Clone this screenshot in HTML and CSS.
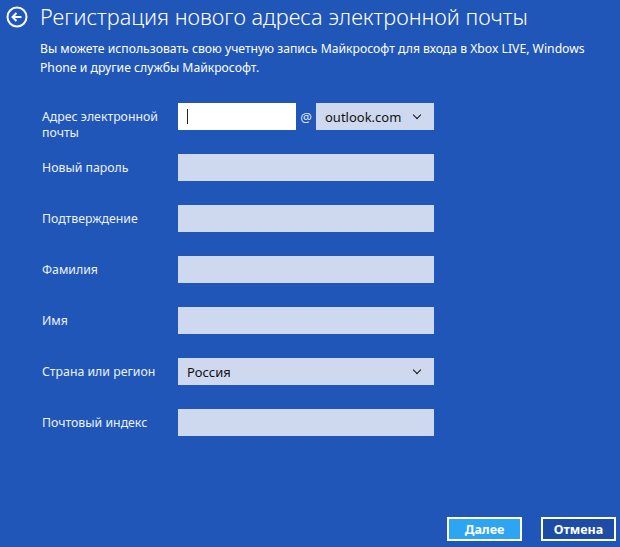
FILE: index.html
```html
<!DOCTYPE html>
<html lang="ru">
<head>
    <meta charset="UTF-8">
    <meta name="viewport" content="width=device-width, initial-scale=1.0">
    <link rel="stylesheet" href="styles.css">
    <title>Регистрация нового адреса электронной почты</title>
</head>
<body>

<div class="page">
    <div class="header">
        <svg class="back" width="22" height="22" viewBox="0 0 22 22">
            <circle cx="11" cy="11" r="9.5" fill="none" stroke="#fff" stroke-width="2"/>
            <path d="M15.5 11H7M10.5 7L6.5 11l4 4" fill="none" stroke="#fff" stroke-width="2"/>
        </svg>
        <h1>Регистрация нового адреса электронной почты</h1>
    </div>

    <p class="intro">Вы можете использовать свою учетную запись Майкрософт для входа в Xbox LIVE, Windows Phone и другие службы Майкрософт.</p>

    <div class="form">
        <div class="row">
            <label class="label">Адрес электронной почты</label>
            <div class="email">
                <div class="field white"><span class="caret"></span></div>
                <span class="at">@</span>
                <div class="field select">outlook.com<span class="chev"></span></div>
            </div>
        </div>
        <div class="row">
            <label class="label">Новый пароль</label>
            <div class="field"></div>
        </div>
        <div class="row">
            <label class="label">Подтверждение</label>
            <div class="field"></div>
        </div>
        <div class="row">
            <label class="label">Фамилия</label>
            <div class="field"></div>
        </div>
        <div class="row">
            <label class="label">Имя</label>
            <div class="field"></div>
        </div>
        <div class="row">
            <label class="label">Страна или регион</label>
            <div class="field select">Россия<span class="chev"></span></div>
        </div>
        <div class="row">
            <label class="label">Почтовый индекс</label>
            <div class="field"></div>
        </div>
    </div>

    <div class="footer">
        <button class="btn primary">Далее</button>
        <button class="btn">Отмена</button>
    </div>
</div>

</body>
</html>
```

FILE: styles.css
```css
body {
    margin: 0;
    background-color: #1f56b8;
    color: #fff;
    font-family: "Noto Sans", "Open Sans", sans-serif;
}

.page {
    height: 547px;
    display: flex;
    flex-direction: column;
}

.header {
    display: flex;
    align-items: center;
    padding: 3px 0 0 6px;
    height: 28px;
}

.back {
    margin-right: 12px;
}

h1 {
    margin: 0 0 2px 0;
    font-size: 21.7px;
    font-weight: 300;
    white-space: nowrap;
}

.intro {
    max-width: 555px;
    margin: 8px 0 0 40px;
    font-size: 12.2px;
    line-height: 19px;
}

.form {
    margin: 26px 0 0 42px;
    display: flex;
    flex-direction: column;
    gap: 24px;
}

.row {
    display: flex;
    align-items: flex-start;
    height: 27px;
}

.label {
    width: 136px;
    font-size: 12.3px;
    line-height: 16px;
    padding-top: 6px;
    color: #eef2fb;
}

.field {
    width: 256px;
    height: 27px;
    background-color: #ced9ef;
    box-sizing: border-box;
    color: #111;
    font-size: 13px;
    display: flex;
    align-items: center;
    padding: 0 9px;
}

.email {
    display: flex;
    align-items: center;
}

.email .field {
    width: 118px;
}

.white {
    background-color: #fff;
}

.caret {
    width: 1px;
    height: 15px;
    background-color: #222;
}

.at {
    width: 20px;
    text-align: center;
    font-size: 13px;
    color: #dfe7f7;
}

.select {
    justify-content: space-between;
}

.chev {
    width: 5px;
    height: 5px;
    border-right: 1.5px solid #111;
    border-bottom: 1.5px solid #111;
    transform: rotate(45deg);
    margin: -4px 5px 0 0;
}

.footer {
    margin-top: auto;
    display: flex;
    justify-content: flex-end;
    gap: 19px;
    padding: 0 4px 6px 0;
}

.btn {
    width: 75px;
    height: 24px;
    border: 2px solid #fff;
    background-color: #1d4ca6;
    color: #fff;
    font-family: "Noto Sans", sans-serif;
    font-size: 12.5px;
    font-weight: bold;
    padding: 0;
}

.primary {
    background-color: #2ea5f3;
}
```
